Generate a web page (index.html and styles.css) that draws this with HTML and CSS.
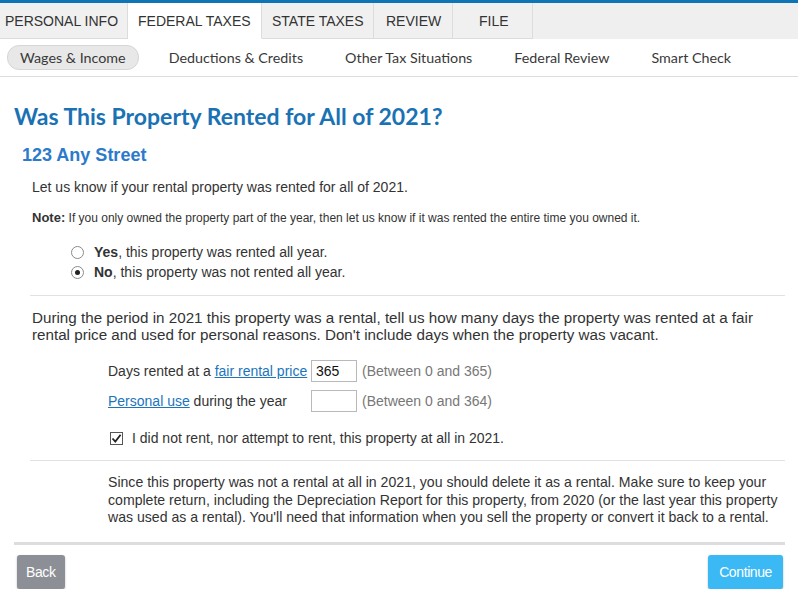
FILE: index.html
```html
<!DOCTYPE html>
<html>
<head lang="en">
    <meta charset="UTF-8">
    <title>Was This Property Rented for All of 2021?</title>
    <link rel="stylesheet" href="styles.css">
</head>
<body>
<div class="top-bar"></div>
<!-- main tabs -->
<div class="tabs">
    <a class="tab" href="javascript:void(0);">PERSONAL INFO</a>
    <a class="tab tab-active" href="javascript:void(0);">FEDERAL TAXES</a>
    <a class="tab" href="javascript:void(0);">STATE TAXES</a>
    <a class="tab" href="javascript:void(0);">REVIEW</a>
    <a class="tab tab-file" href="javascript:void(0);">FILE</a>
</div>
<!-- sub tabs -->
<div class="subnav">
    <a class="subnav-item subnav-active" href="javascript:void(0);">Wages &amp; Income</a>
    <a class="subnav-item" href="javascript:void(0);">Deductions &amp; Credits</a>
    <a class="subnav-item" href="javascript:void(0);">Other Tax Situations</a>
    <a class="subnav-item" href="javascript:void(0);">Federal Review</a>
    <a class="subnav-item" href="javascript:void(0);">Smart Check</a>
</div>

<div class="page">
    <h1 class="page-title">Was This Property Rented for All of 2021?</h1>
    <h2 class="page-subtitle">123 Any Street</h2>

    <div class="intro">
        <p class="intro-text">Let us know if your rental property was rented for all of 2021.</p>
        <p class="note"><b>Note:</b> If you only owned the property part of the year, then let us know if it was rented the entire time you owned it.</p>
        <div class="radio-list">
            <label class="radio-row"><span class="radio"></span><span><b>Yes</b>, this property was rented all year.</span></label>
            <label class="radio-row"><span class="radio radio-on"></span><span><b>No</b>, this property was not rented all year.</span></label>
        </div>
    </div>

    <div class="rule"></div>

    <div class="days">
        <p class="days-text">During the period in 2021 this property was a rental, tell us how many days the property was rented at a fair rental price and used for personal reasons. Don't include days when the property was vacant.</p>
        <div class="days-form">
            <div class="days-row">
                <span class="days-label">Days rented at a <a class="link" href="javascript:void(0);">fair rental price</a></span>
                <span class="days-input">365</span>
                <span class="days-hint">(Between 0 and 365)</span>
            </div>
            <div class="days-row">
                <span class="days-label"><a class="link" href="javascript:void(0);">Personal use</a> during the year</span>
                <span class="days-input"></span>
                <span class="days-hint">(Between 0 and 364)</span>
            </div>
            <label class="check-row">
                <span class="check"><svg width="11" height="11" viewBox="0 0 11 11"><path d="M1.5 5.5 L4.3 8.6 L9.6 1.8" fill="none" stroke="#222" stroke-width="1.8"/></svg></span>
                <span>I did not rent, nor attempt to rent, this property at all in 2021.</span>
            </label>
        </div>
    </div>

    <div class="rule rule-low"></div>

    <p class="warning">Since this property was not a rental at all in 2021, you should delete it as a rental. Make sure to keep your complete return, including the Depreciation Report for this property, from 2020 (or the last year this property was used as a rental). You'll need that information when you sell the property or convert it back to a rental.</p>

    <div class="footer">
        <a class="btn btn-back" href="javascript:void(0);">Back</a>
        <a class="btn btn-continue" href="javascript:void(0);">Continue</a>
    </div>
</div>
</body>
</html>
```

FILE: styles.css
```css
body, div, p, span, h1, h2, a, label {
    padding: 0px;
    margin: 0px;
}

body {
    background: #ffffff;
    font-family: "Liberation Sans", Arial, sans-serif;
    color: #333333;
}

a {
    text-decoration: none;
    color: #333333;
}

.top-bar {
    height: 3px;
    background: #0d74b5;
}

/* main tabs */
.tabs {
    display: flex;
    height: 36px;
    background: #efefef;
}
.tab {
    box-sizing: border-box;
    display: flex;
    align-items: center;
    font-size: 14px;
    border-right: 1px solid #dcdcdc;
    border-bottom: 1px solid #dcdcdc;
    background: #f0f0f0;
}
.tab:nth-child(1) { width: 128px; padding-left: 5px; }
.tab:nth-child(2) { width: 134px; padding-left: 10px; }
.tab:nth-child(3) { width: 112px; padding-left: 10px; }
.tab:nth-child(4) { width: 79px; padding-left: 12px; }
.tab:nth-child(5) { width: 80px; padding-left: 26px; }
.tab-active {
    background: #ffffff;
    border-bottom-color: #ffffff;
}

/* sub tabs */
.subnav {
    display: flex;
    align-items: center;
    height: 37px;
    border-bottom: 1px solid #dddddd;
    font-family: "Lato", "Open Sans", sans-serif;
    font-size: 14.3px;
    padding-left: 7px;
}
.subnav-item {
    color: #393939;
    margin-right: 42px;
}
.subnav-active {
    background: #e8e8e8;
    border: 1px solid #d6d6d6;
    border-radius: 12px;
    padding: 3px 12px 3px 12px;
    margin-right: 30px;
}

/* page */
.page {
    padding: 0px 13px 0px 14px;
}
.page-title {
    font-family: "Lato", "Open Sans", sans-serif;
    font-size: 23px;
    font-weight: 700;
    color: #1a72b4;
    margin-top: 25px;
    line-height: 28px;
}
.page-subtitle {
    font-size: 18px;
    font-weight: bold;
    color: #2c7acb;
    margin: 14px 0px 0px 8px;
    line-height: 22px;
}

.intro {
    padding-left: 18px;
}
.intro-text {
    font-size: 14px;
    margin-top: 12px;
    line-height: 18px;
}
.note {
    font-size: 12px;
    margin-top: 14px;
    line-height: 16px;
}
.note b {
    font-size: 13px;
}
.radio-list {
    margin: 16px 0px 0px 39px;
}
.radio-row {
    display: flex;
    align-items: center;
    font-size: 14px;
    line-height: 20px;
}
.radio {
    width: 11px;
    height: 11px;
    border: 1px solid #8a8a8a;
    border-radius: 50%;
    margin-right: 10px;
    position: relative;
    background: #ffffff;
}
.radio-on:after {
    content: "";
    position: absolute;
    left: 3px;
    top: 3px;
    width: 5px;
    height: 5px;
    border-radius: 50%;
    background: #222222;
}

.rule {
    height: 1px;
    background: #e2e2e2;
    margin: 13px 0px 0px 16px;
}
.rule-low {
    margin-top: 14px;
}

.days {
    padding-left: 18px;
}
.days-text {
    font-size: 15.2px;
    line-height: 17px;
    margin-top: 13px;
}
.days-form {
    padding-left: 76px;
    margin-top: 17px;
}
.days-row {
    display: flex;
    align-items: center;
    height: 22px;
    margin-bottom: 8px;
    font-size: 14px;
}
.days-label {
    width: 203px;
}
.link {
    color: #1b75bb;
    text-decoration: underline;
}
.days-input {
    width: 40px;
    height: 20px;
    border: 1px solid #b9b9b9;
    padding-left: 4px;
    line-height: 20px;
    font-size: 14px;
    color: #111111;
}
.days-hint {
    color: #777777;
    margin-left: 5px;
}
.check-row {
    display: flex;
    align-items: center;
    font-size: 14px;
    margin-top: 18px;
    padding-left: 2px;
}
.check {
    display: flex;
    align-items: center;
    justify-content: center;
    width: 11px;
    height: 11px;
    border: 1px solid #555555;
    margin-right: 9px;
}

.warning {
    font-size: 14.1px;
    line-height: 17.5px;
    margin: 13px 0px 0px 94px;
}

.footer {
    display: flex;
    justify-content: space-between;
    border-top: 3px solid #dddddd;
    margin-top: 15px;
    padding: 10px 2px 0px 3px;
}
.btn {
    display: block;
    color: #ffffff;
    font-size: 14px;
    line-height: 34px;
    height: 34px;
    padding: 0px 9px;
    border-radius: 3px;
    box-shadow: 0px 1px 2px rgba(0, 0, 0, 0.3);
    letter-spacing: -0.4px;
}
.btn-back {
    background: #8c8f95;
}
.btn-continue {
    background: #3bb9f5;
    padding: 0px 11px;
}
```
